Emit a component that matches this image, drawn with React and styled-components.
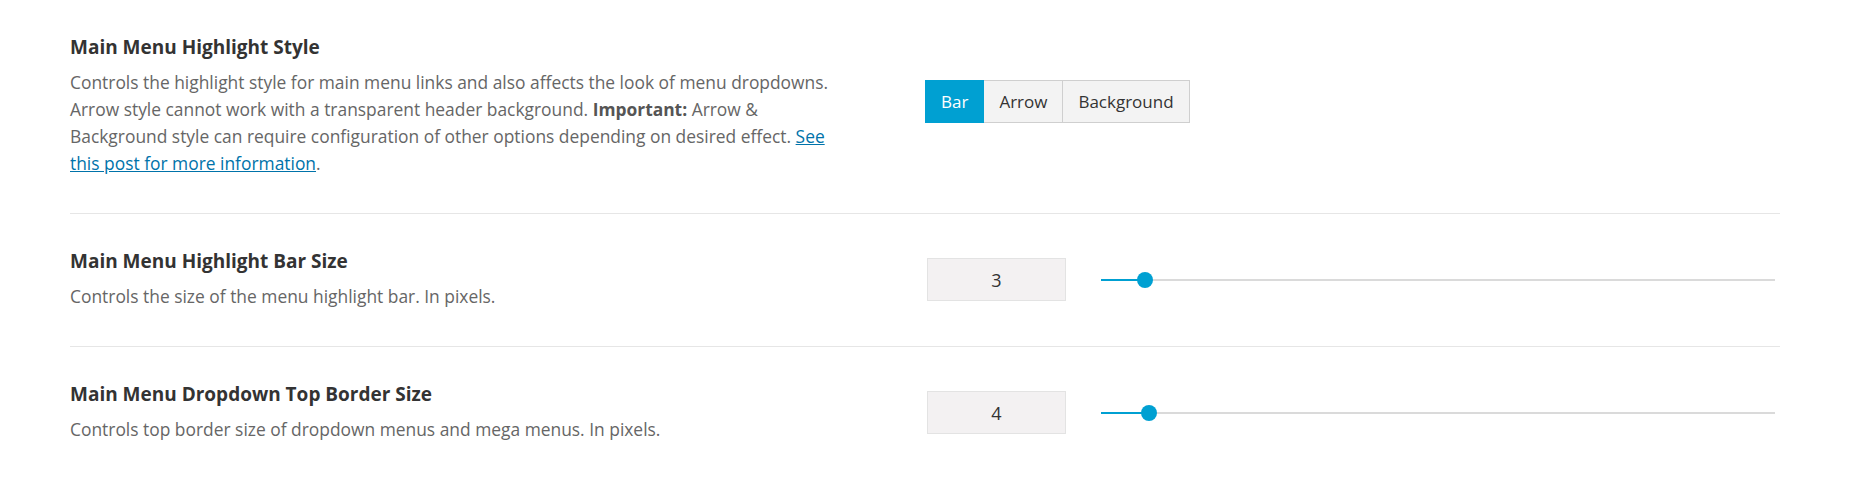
import React from 'react';
import styled, { createGlobalStyle } from 'styled-components';

const GlobalStyle = createGlobalStyle`
  body {
    margin: 0;
    background: #fff;
    font-family: 'Open Sans', 'Noto Sans', Arial, sans-serif;
  }
`;

const Page = styled.div`
  padding: 0 70px;
`;

const Row = styled.div`
  display: grid;
  grid-template-columns: 1fr 1fr;
  align-items: center;
  padding: 35px 0 36px;
  border-bottom: ${(p) => (p.last ? 'none' : '1px solid #e6e6e6')};
`;

const Info = styled.div`
  padding-right: 68px;
`;

const Title = styled.h3`
  margin: 0 0 10px;
  font-size: 19px;
  line-height: 24px;
  font-weight: 700;
  color: #333;
`;

const Desc = styled.p`
  margin: 0;
  font-size: 17.4px;
  line-height: 27px;
  color: #666;

  strong {
    color: #555;
  }

  a {
    color: #0073aa;
    text-decoration: underline;
  }
`;

const Control = styled.div`
  display: flex;
  align-items: center;
`;

const ButtonSet = styled.div`
  display: flex;
  height: 43px;
  margin-bottom: 9px;
`;

const SetButton = styled.button`
  height: 43px;
  padding: 0 15px;
  margin: 0;
  font-family: inherit;
  font-size: 17px;
  color: ${(p) => (p.active ? '#fff' : '#333')};
  background: ${(p) => (p.active ? '#00a0d2' : '#f3f3f3')};
  border: 1px solid ${(p) => (p.active ? '#00a0d2' : '#cfcfcf')};
  border-left-width: ${(p) => (p.first ? '1px' : '0')};
  cursor: pointer;
`;

const NumberBox = styled.div`
  box-sizing: border-box;
  width: 139px;
  height: 43px;
  margin-left: 2px;
  display: flex;
  align-items: center;
  justify-content: center;
  background: #f3f1f2;
  border: 1px solid #e3e3e3;
  font-size: 18px;
  color: #333;
  flex-shrink: 0;
`;

const Track = styled.div`
  position: relative;
  flex: 1;
  height: 2px;
  margin: 0 5px 0 35px;
  background: #dadada;
`;

const Fill = styled.div`
  height: 2px;
  background: #00a0d2;
`;

const Thumb = styled.span`
  position: absolute;
  top: 50%;
  width: 16px;
  height: 16px;
  margin: -8px 0 0 -8px;
  border-radius: 50%;
  background: #00a0d2;
`;

const Slider = ({ value, min, max }) => {
  const pct = ((value - min) / (max - min)) * 100;
  const pos = `calc(8px + ${pct / 100} * (100% - 16px))`;
  return (
    <Control>
      <NumberBox>{value}</NumberBox>
      <Track>
        <Fill style={{ width: pos }} />
        <Thumb style={{ left: pos }} />
      </Track>
    </Control>
  );
};

const App = () => {
  const styles = ['Bar', 'Arrow', 'Background'];
  return (
    <Page>
      <GlobalStyle />
      <Row>
        <Info>
          <Title>Main Menu Highlight Style</Title>
          <Desc>
            Controls the highlight style for main menu links and also affects the look of menu dropdowns.
            Arrow style cannot work with a transparent header background. <strong>Important:</strong> Arrow
            &amp; Background style can require configuration of other options depending on desired effect.{' '}
            <a href="#post">See this post for more information</a>.
          </Desc>
        </Info>
        <Control>
          <ButtonSet>
            {styles.map((s, i) => (
              <SetButton key={s} active={i === 0} first={i === 0}>
                {s}
              </SetButton>
            ))}
          </ButtonSet>
        </Control>
      </Row>
      <Row>
        <Info>
          <Title>Main Menu Highlight Bar Size</Title>
          <Desc>Controls the size of the menu highlight bar. In pixels.</Desc>
        </Info>
        <Slider value={3} min={0} max={55} />
      </Row>
      <Row last>
        <Info>
          <Title>Main Menu Dropdown Top Border Size</Title>
          <Desc>Controls top border size of dropdown menus and mega menus. In pixels.</Desc>
        </Info>
        <Slider value={4} min={0} max={65} />
      </Row>
    </Page>
  );
};

export default App;
